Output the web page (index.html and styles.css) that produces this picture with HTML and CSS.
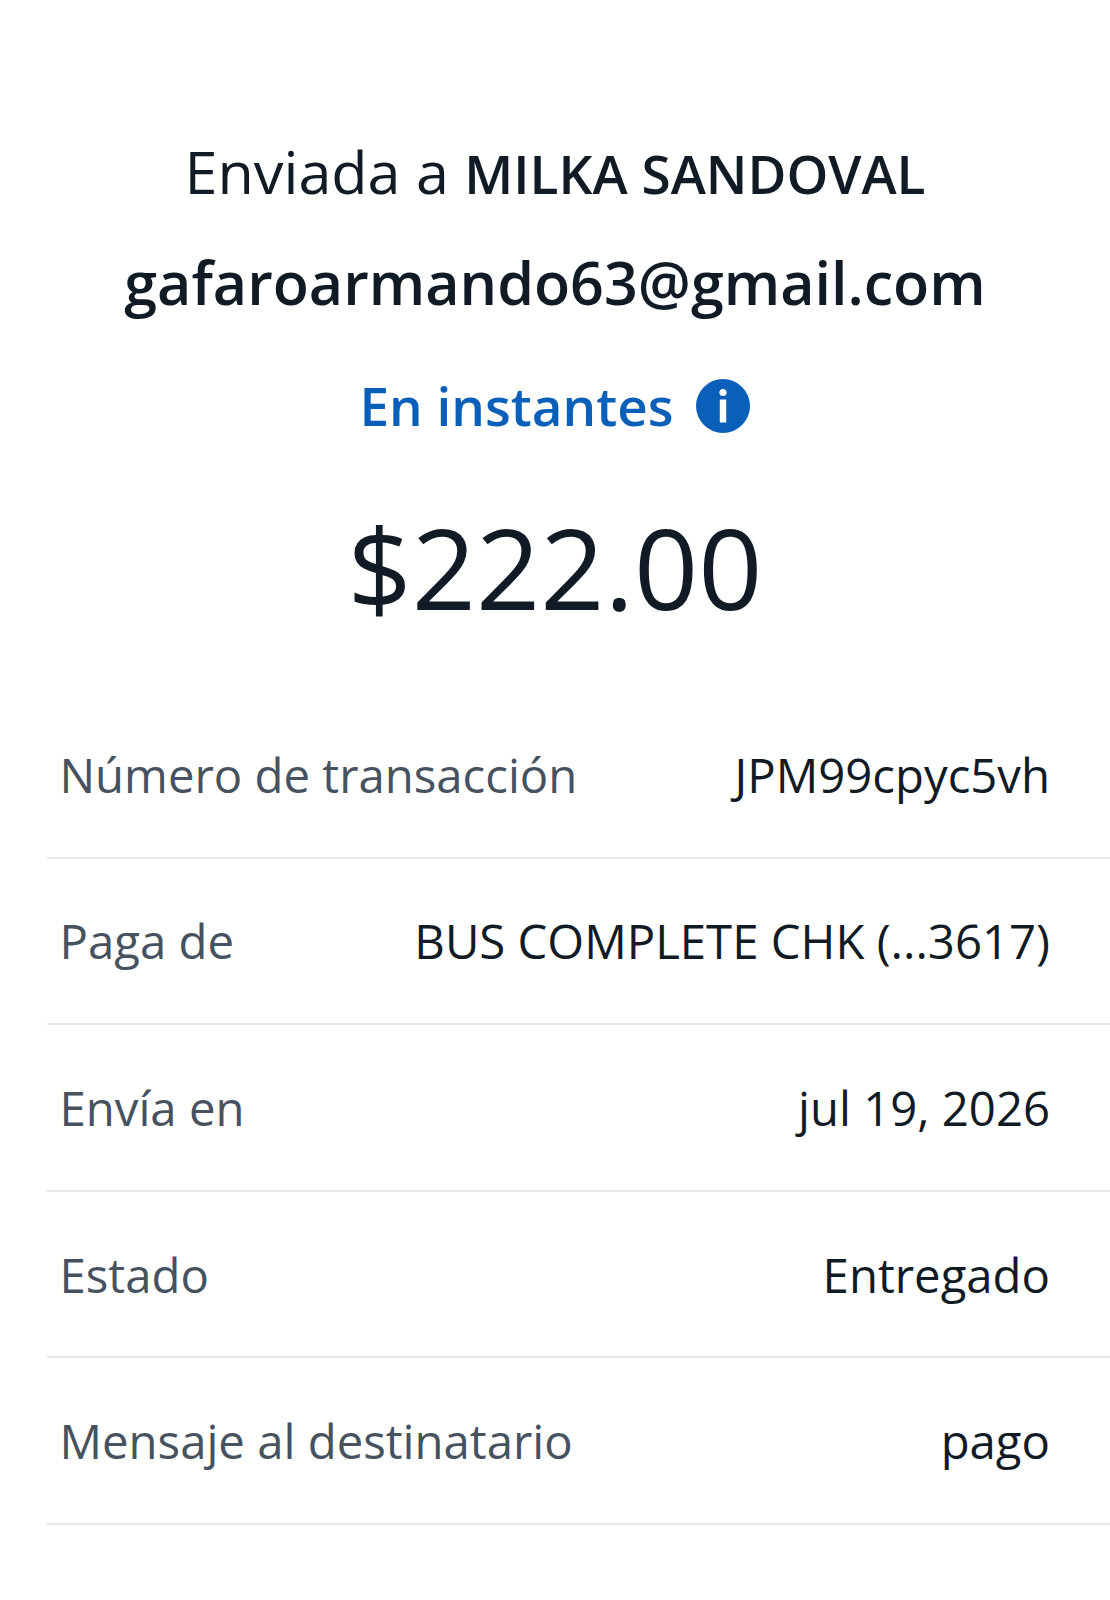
FILE: index.html
```html
<!DOCTYPE html>
<html lang="es">
<head>
    <meta charset="UTF-8">
    <title>Enviada</title>
    <link rel="stylesheet" href="styles.css">
</head>
<body>
    <div class="summary">
        <p class="recipient">Enviada a <strong>MILKA SANDOVAL</strong></p>
        <p class="email">gafaroarmando63@gmail.com</p>
        <p class="speed">
            <span>En instantes</span>
            <svg class="info-icon" viewBox="0 0 54 54" aria-hidden="true">
                <circle cx="27" cy="27" r="27" fill="#0a5fb9"/>
                <circle cx="27" cy="13.5" r="3.6" fill="#fff"/>
                <rect x="23.8" y="20.5" width="6.4" height="23" fill="#fff"/>
            </svg>
        </p>
        <p class="amount">$222.00</p>
    </div>
    <div class="details">
        <div class="row"><span class="label">Número de transacción</span><span class="value">JPM99cpyc5vh</span></div>
        <div class="row"><span class="label">Paga de</span><span class="value">BUS COMPLETE CHK (...3617)</span></div>
        <div class="row"><span class="label">Envía en</span><span class="value">jul 19, 2026</span></div>
        <div class="row"><span class="label">Estado</span><span class="value">Entregado</span></div>
        <div class="row"><span class="label">Mensaje al destinatario</span><span class="value">pago</span></div>
    </div>
</body>
</html>
```

FILE: styles.css
```css
body {
    margin: 0;
    background-color: #fff;
    color: #111b25;
    font-family: "Open Sans", "Noto Sans", sans-serif;
}

p {
    margin: 0;
}

.summary {
    padding-top: 133px;
    text-align: center;
}

.recipient {
    font-size: 59.3px;
    line-height: 76px;
}

.recipient strong {
    font-weight: 600;
    font-size: 53.2px;
}

.email {
    margin-top: 32px;
    font-size: 59.2px;
    line-height: 76px;
    font-weight: 600;
}

.speed {
    display: flex;
    justify-content: center;
    align-items: center;
    gap: 23px;
    margin-top: 48px;
    font-size: 53px;
    line-height: 76px;
    font-weight: 600;
    color: #0a5fb9;
}

.info-icon {
    width: 54px;
    height: 54px;
}

.amount {
    margin-top: 53px;
    font-size: 112.4px;
    line-height: 140px;
}

.details {
    margin-top: 55px;
    margin-left: 47px;
}

.row {
    display: flex;
    justify-content: space-between;
    align-items: center;
    height: 164.6px;
    padding: 0 60px 0 12.5px;
    border-bottom: 2px solid #e6e8eb;
    font-size: 47.3px;
}

.label {
    color: #465260;
}
```
